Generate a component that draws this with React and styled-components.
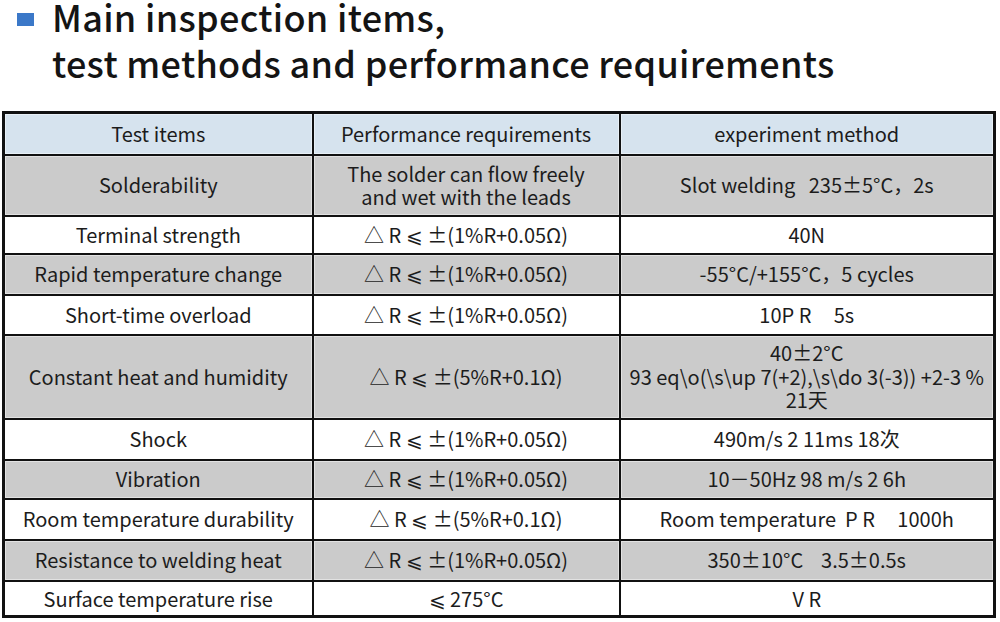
import React from "react";
import styled, { createGlobalStyle } from "styled-components";

const Global = createGlobalStyle`
  html, body { margin: 0; padding: 0; background: #ffffff; }
  body { font-family: "Noto Sans CJK SC", "Noto Sans", sans-serif; color: #1e1e1e; }
`;

const Page = styled.div`
  width: 1000px;
  height: 622px;
  overflow: hidden;
  display: flex;
  flex-direction: column;
  background: #fff;
`;

const TitleRow = styled.div`
  display: flex;
  align-items: flex-start;
  padding: 0 0 0 17px;
  margin-top: -7px;
  height: 118px;
`;

const Bullet = styled.span`
  flex: none;
  width: 17px;
  height: 13px;
  margin-top: 20px;
  margin-right: 18px;
  background: #3b78c8;
`;

const Title = styled.h1`
  margin: 0;
  font-family: "Noto Sans CJK SC", "Noto Sans", sans-serif;
  font-weight: 500;
  font-size: 36px;
  line-height: 46px;
  color: #141414;
  letter-spacing: 0.3px;
`;

const Table = styled.table`
  margin-left: 2px;
  width: 994px;
  border-collapse: collapse;
  table-layout: fixed;
  border: 3px solid #111;
`;

const tones = {
  head: "#d6e3ee",
  grey: "#cbcbcb",
  white: "#ffffff",
};

const Row = styled.tr`
  height: ${(p) => p.$h}px;
  background: ${(p) => tones[p.$tone]};
`;

const Cell = styled.td`
  border: 2.5px solid #111;
  padding: 0 4px;
  text-align: center;
  vertical-align: middle;
  font-size: 20px;
  line-height: 23.5px;
  color: #1c1c1c;
  box-shadow: inset 0 0 0 1px rgba(255, 255, 255, 0.45);
`;

const HeadCell = styled(Cell).attrs({ as: "th" })`
  font-weight: 400;
`;

const Line = styled.div`
  white-space: pre;
`;

const rows = [
  { h: 61, tone: "grey", item: "Solderability", perf: ["The solder can flow freely", "and wet with the leads"], method: ["Slot welding   235±5°C，2s"] },
  { h: 38, tone: "white", item: "Terminal strength", perf: ["△ R ⩽ ±(1%R+0.05Ω)"], method: ["40N"] },
  { h: 41, tone: "grey", item: "Rapid temperature change", perf: ["△ R ⩽ ±(1%R+0.05Ω)"], method: ["-55°C/+155°C，5 cycles"] },
  { h: 40, tone: "white", item: "Short-time overload", perf: ["△ R ⩽ ±(1%R+0.05Ω)"], method: ["10P R     5s"] },
  { h: 84, tone: "grey", item: "Constant heat and humidity", perf: ["△ R ⩽ ±(5%R+0.1Ω)"], method: ["40±2°C", "93 eq\\o(\\s\\up 7(+2),\\s\\do 3(-3)) +2-3 %", "21天"] },
  { h: 41, tone: "white", item: "Shock", perf: ["△ R ⩽ ±(1%R+0.05Ω)"], method: ["490m/s 2 11ms 18次"] },
  { h: 39, tone: "grey", item: "Vibration", perf: ["△ R ⩽ ±(1%R+0.05Ω)"], method: ["10－50Hz 98 m/s 2 6h"] },
  { h: 41, tone: "white", item: "Room temperature durability", perf: ["△ R ⩽ ±(5%R+0.1Ω)"], method: ["Room temperature  P R     1000h"] },
  { h: 41, tone: "grey", item: "Resistance to welding heat", perf: ["△ R ⩽ ±(1%R+0.05Ω)"], method: ["350±10°C    3.5±0.5s"] },
  { h: 36, tone: "white", item: "Surface temperature rise", perf: ["⩽ 275°C"], method: ["V R"] },
];

const Lines = ({ list }) => list.map((t, i) => <Line key={i}>{t}</Line>);

export default function App() {
  return (
    <Page>
      <Global />
      <TitleRow>
        <Bullet />
        <Title>
          Main inspection items,
          <br />
          test methods and performance requirements
        </Title>
      </TitleRow>
      <Table>
        <colgroup>
          <col style={{ width: "309px" }} />
          <col style={{ width: "307px" }} />
          <col />
        </colgroup>
        <thead>
          <Row $h={42} $tone="head">
            <HeadCell>Test items</HeadCell>
            <HeadCell>Performance requirements</HeadCell>
            <HeadCell>experiment method</HeadCell>
          </Row>
        </thead>
        <tbody>
          {rows.map((r) => (
            <Row key={r.item} $h={r.h} $tone={r.tone}>
              <Cell>{r.item}</Cell>
              <Cell>
                <Lines list={r.perf} />
              </Cell>
              <Cell>
                <Lines list={r.method} />
              </Cell>
            </Row>
          ))}
        </tbody>
      </Table>
    </Page>
  );
}
